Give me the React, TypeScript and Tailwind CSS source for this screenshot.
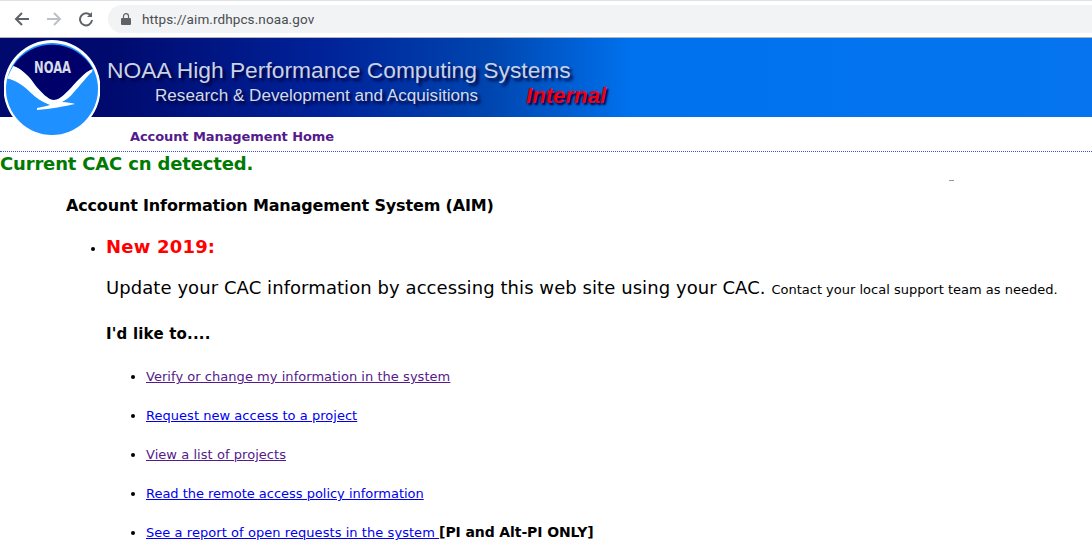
const verdana = "font-['DejaVu_Sans',sans-serif]";

function Logo() {
  return (
    <svg width="96" height="99" viewBox="0 0 96 99" className="absolute left-[4px] top-[1px]">
      <circle cx="48" cy="49.5" r="48.5" fill="#fff" />
      <circle cx="48" cy="50" r="46" fill="#1e90ff" />
      <path d="M9.3 27A46 46 0 0 1 88.7 30C80 33 72 44 64 52C58 58 54 61 50 61C44 61 37 53 31 46C26 38 18 30 9.3 27Z" fill="#00006b" />
      <path d="M9.3 27C18 30 26 38 31 46C37 53 44 61 50 61C54 61 58 58 64 52C72 44 80 33 88.7 30L88 33C82 38 76 47 70 53C66 58 62 61 58 63C63 63 68 64 71 65C62 67 46 70 33 71L33 69C38 68 43 67 46 66C38 63 32 59 27 54C20 47 12 41 3 39.5C5 35 7 31 9.3 27Z" fill="#fff" />
      <text x="48.5" y="34" textAnchor="middle" fill="#d8dce8" textLength="37" lengthAdjust="spacingAndGlyphs" className="font-['DejaVu_Sans',sans-serif] text-[15px] font-bold">NOAA</text>
    </svg>
  );
}

function Links() {
  const rows = [
    { t: "Verify or change my information in the system", c: "text-[#551a8b] tracking-[0.04px]" },
    { t: "Request new access to a project", c: "text-[#0000ee] tracking-[0.03px]" },
    { t: "View a list of projects", c: "text-[#551a8b] tracking-[0.05px]" },
    { t: "Read the remote access policy information", c: "text-[#0000ee] tracking-[-0.02px]" },
    { t: "See a report of open requests in the system ", c: "text-[#0000ee] tracking-[0.06px]", extra: "[PI and Alt-PI ONLY]" },
  ];
  return (
    <ul className="mt-6 ml-10 flex list-disc flex-col gap-[21px] text-[13px] leading-[18px]">
      {rows.map((r) => (
        <li key={r.t} className="h-[18px] whitespace-nowrap">
          <a className={`whitespace-pre underline ${r.c}`}>{r.t}</a>
          {r.extra && <b className="text-[14px] leading-[14px] tracking-[-0.1px] text-black">{r.extra}</b>}
        </li>
      ))}
    </ul>
  );
}

export default function App() {
  return (
    <div className={`relative h-[551px] w-[1092px] overflow-hidden bg-white text-black ${verdana}`}>
      <div className="flex h-[38px] items-center border-t border-b border-t-[#dee1e6] border-b-[#b4b4b4] bg-white">
        <svg width="16" height="16" viewBox="0 0 16 16" className="ml-[14px]" fill="none" stroke="#5f6368" strokeWidth="2">
          <path d="M15 8H2M8 2 2 8l6 6" />
        </svg>
        <svg width="16" height="16" viewBox="0 0 16 16" className="ml-[16px]" fill="none" stroke="#bdc1c6" strokeWidth="2">
          <path d="M1 8h13M8 2l6 6-6 6" />
        </svg>
        <svg width="16" height="16" viewBox="0 0 16 16" className="ml-[16px]" fill="none" stroke="#5f6368" strokeWidth="2">
          <path d="M13 5A6 6 0 1 0 14 9" />
          <path d="M14 1v5H9z" fill="#5f6368" stroke="none" />
        </svg>
        <div className="ml-[14px] flex h-7 flex-1 items-center rounded-l-full bg-[#f1f3f4] pl-[13px]">
          <svg width="10" height="12" viewBox="0 0 10 12" fill="#5f6368">
            <path d="M1 5h8a1 1 0 0 1 1 1v5a1 1 0 0 1-1 1H1a1 1 0 0 1-1-1V6a1 1 0 0 1 1-1Z" />
            <path d="M2.5 5V3.2a2.5 2.5 0 0 1 5 0V5" fill="none" stroke="#5f6368" strokeWidth="1.2" />
          </svg>
          <span className="ml-[11px] font-['Roboto',sans-serif] text-[13.5px] tracking-[0.1px] text-[#4a4d51]">https://aim.rdhpcs.noaa.gov</span>
        </div>
      </div>

      <div className="relative h-[79px] bg-[linear-gradient(90deg,#000a6e_0%,#000a6e_10%,#00239a_30%,#0046b0_45%,#0072ee_58%,#0574ee_100%)] font-['Liberation_Sans',sans-serif]">
        <div className="whitespace-nowrap pl-[107px] pt-[18px] text-[22.8px] leading-[28px] text-[#c9d3e6] [text-shadow:3px_3px_3px_#00003c]">NOAA High Performance Computing Systems</div>
        <div className="whitespace-nowrap pl-[155px] pt-[1px] text-[17.1px] leading-[22px] text-[#d3dbe9] [text-shadow:3px_3px_3px_#00003c]">Research &amp; Development and Acquisitions</div>
        <div className="absolute left-[526px] top-[44px] text-[22.2px] font-bold italic leading-[28px] text-[#f0000f] [text-shadow:2px_2px_2px_#00004a]">Internal</div>
        <Logo />
      </div>

      <div className="h-[35px] border-b border-dotted border-b-[#3355dd] pl-[130px] pt-3 text-[13px] font-bold leading-[16px] tracking-[-0.09px] text-[#551a8b]">Account Management Home</div>

      <div className="h-[23px] text-[18px] font-bold leading-[23px] tracking-[-0.17px] text-[#007a00]">Current CAC cn detected.</div>

      <div className="absolute left-[949px] top-[180px] h-px w-[5px] bg-[#9a9a9a]" />

      <div className="ml-[66px] mt-[21px] text-[16px] font-bold leading-[20px] tracking-[-0.16px]">Account Information Management System (AIM)</div>

      <ul className="ml-[106px] mt-[19px] list-disc">
        <li className="text-[13px]">
          <div className="text-[18px] font-bold leading-[23px] tracking-[0.2px] text-[#ff0000]">New 2019:</div>
          <div className="mt-[18px] whitespace-nowrap text-[18px] leading-[23px] tracking-[0.07px]">
            Update your CAC information by accessing this web site using your CAC. <span className="text-[13px] tracking-normal">Contact your local support team as needed.</span>
          </div>
          <div className="mt-6 text-[15px] font-bold leading-[19px] tracking-[0.2px]">I'd like to....</div>
          <Links />
        </li>
      </ul>
    </div>
  );
}
